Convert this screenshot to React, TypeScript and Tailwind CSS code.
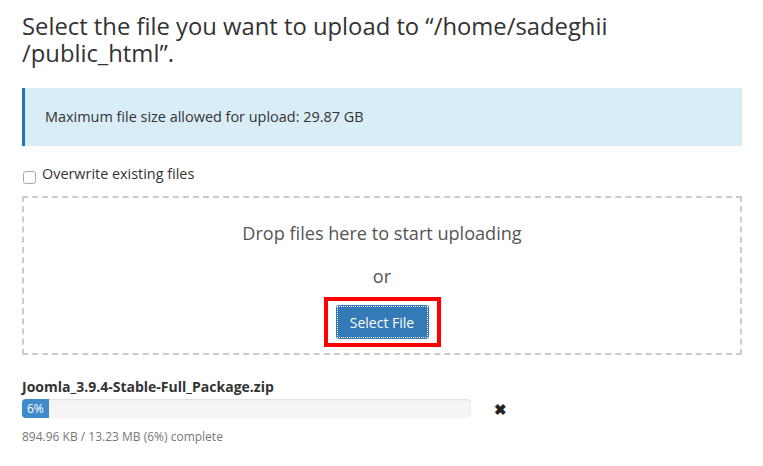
import React from "react";

export default function App() {
  return (
    <div
      className="w-[763px] h-[466px] bg-white text-[#333] overflow-hidden"
      style={{ fontFamily: '"Open Sans", sans-serif' }}
    >
      <div className="pl-[22px] pr-[21px] pt-[13px]">
        <h1 className="text-[23.8px] leading-[27px] font-normal text-[#333]">
          Select the file you want to upload to “/home/sadeghii
          <br />
          /public_html”.
        </h1>

        <div className="mt-[21px] h-[58px] bg-[#d9edf7] border-l-[3px] border-[#1f77b4] flex items-center pl-[20px] text-[14.45px]">
          Maximum file size allowed for upload: 29.87 GB
        </div>

        <label className="mt-[18px] flex items-center gap-[6px] text-[14.4px] h-[20px]">
          <span className="ml-[1px] mt-[6px] w-[13px] h-[13px] border border-[#aaa] rounded-[3px] bg-white" />
          <span>Overwrite existing files</span>
        </label>

        <div className="mt-[12px] h-[159px] border-2 border-dashed border-[#ccc] flex flex-col items-center">
          <div className="mt-[23px] text-[18.1px] leading-[24px] text-[#555]">
            Drop files here to start uploading
          </div>
          <div className="mt-[19px] text-[18.1px] leading-[24px] text-[#555]">or</div>
          <div className="mt-[9px] border-[4px] border-[#ff0000] px-[8px] pt-[4px] pb-[4px]">
            <button className="h-[34px] w-[93px] bg-[#337ab7] text-white text-[14px] rounded-[3px] flex items-center justify-center p-[1px]">
              <span className="w-full h-full border border-dotted border-white flex items-center justify-center">
                Select File
              </span>
            </button>
          </div>
        </div>

        <div className="mt-[22px] text-[14px] font-bold leading-[20px]">
          Joomla_3.9.4-Stable-Full_Package.zip
        </div>
        <div className="mt-[2px] flex items-center">
          <div className="w-[449px] h-[19px] bg-[#f5f5f5] rounded-[4px] overflow-hidden shadow-[inset_0_1px_2px_rgba(0,0,0,0.1)] flex">
            <div className="w-[27px] h-full bg-[#428bca] text-white text-[12px] leading-[19px] pl-[5px]">
              6%
            </div>
          </div>
          <span className="ml-[23px] mt-[2px] text-[15px] leading-none font-bold text-[#222]">✖</span>
        </div>
        <div className="mt-[10px] text-[12px] leading-[17px] text-[#777]">
          894.96 KB / 13.23 MB (6%) complete
        </div>
      </div>
    </div>
  );
}
